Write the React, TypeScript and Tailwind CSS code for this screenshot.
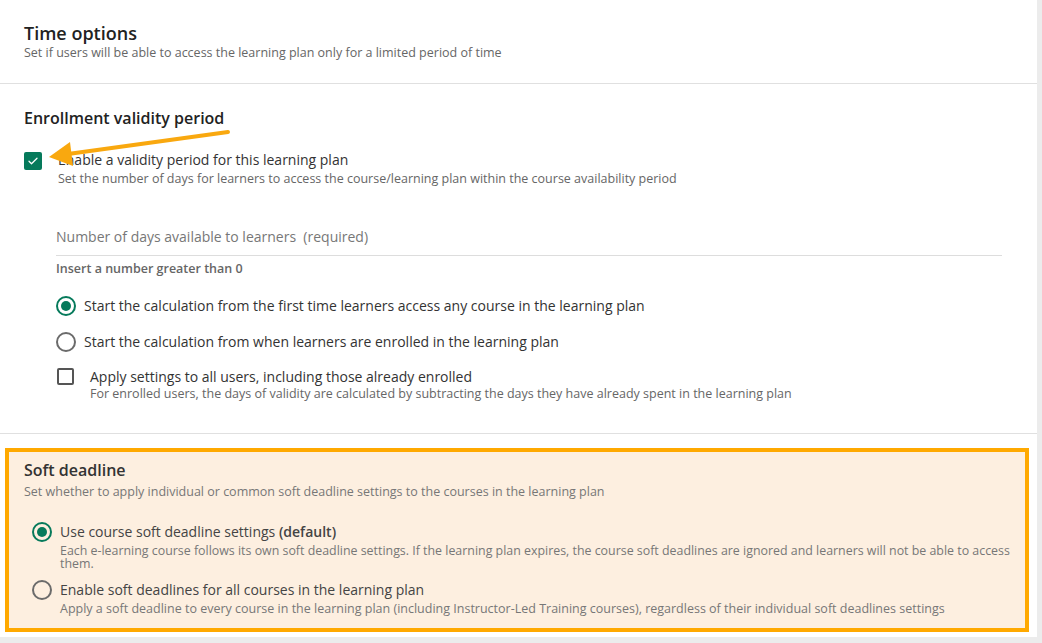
import React from 'react';

function Radio({ checked }: { checked?: boolean }) {
  return checked ? (
    <span className="flex h-[20px] w-[20px] shrink-0 items-center justify-center rounded-full border-2 border-[#067a5b]">
      <span className="h-[10px] w-[10px] rounded-full bg-[#067a5b]" />
    </span>
  ) : (
    <span className="block h-[20px] w-[20px] shrink-0 rounded-full border-2 border-[#6b6b6b]" />
  );
}

function Arrow() {
  return (
    <svg className="pointer-events-none absolute left-0 top-0" width="260" height="190" viewBox="0 0 260 190">
      <line x1="228" y1="132" x2="68" y2="154" stroke="#f9a80f" strokeWidth="4" strokeLinecap="round" />
      <polygon points="49,157 70,142 73,166" fill="#f9a80f" />
    </svg>
  );
}

export default function App() {
  return (
    <div className="relative flex h-[643px] w-[1042px] bg-[#ececec] font-['Open_Sans',sans-serif] text-[#333]">
      <div className="h-[637px] w-[1037px] overflow-hidden bg-white">
        {/* Time options header */}
        <div className="h-[84px] border-b border-[#e0e0e0] px-[24px] pt-[20px]">
          <h1 className="text-[18px] font-semibold leading-[26px] text-[#222]">Time options</h1>
          <p className="text-[12.5px] leading-[14px] text-[#666]">
            Set if users will be able to access the learning plan only for a limited period of time
          </p>
        </div>

        {/* Enrollment validity period */}
        <div className="h-[350px] border-b border-[#e0e0e0] pl-[24px] pr-[35px] pt-[22px]">
          <h2 className="text-[16px] font-semibold leading-[24px] text-[#222]">Enrollment validity period</h2>

          <div className="mt-[20px] flex gap-[16px]">
            <span className="mt-[2px] flex h-[18px] w-[18px] shrink-0 items-center justify-center rounded-[2px] bg-[#067a5b]">
              <svg width="12" height="12" viewBox="0 0 24 24" fill="none" stroke="white" strokeWidth="2.5" strokeLinecap="round" strokeLinejoin="round">
                <path d="M4 12.5l5 5L20 6.5" />
              </svg>
            </span>
            <div>
              <p className="text-[14px] leading-[20px] text-[#333]">Enable a validity period for this learning plan</p>
              <p className="text-[12.5px] leading-[17px] text-[#666]">
                Set the number of days for learners to access the course/learning plan within the course availability period
              </p>
            </div>
          </div>

          <div className="ml-[32px] mt-[40px]">
            <div className="border-b border-[#ddd] pb-[8px] text-[14px] leading-[20px] text-[#777]">
              Number of days available to learners&nbsp; (required)
            </div>
            <p className="mt-[5px] text-[12.5px] font-semibold leading-[16px] text-[#666]">Insert a number greater than 0</p>

            <div className="mt-[19px] flex items-center gap-[8px]">
              <Radio checked />
              <span className="text-[14px] leading-[20px]">
                Start the calculation from the first time learners access any course in the learning plan
              </span>
            </div>
            <div className="mt-[16px] flex items-center gap-[8px]">
              <Radio />
              <span className="text-[14px] leading-[20px]">Start the calculation from when learners are enrolled in the learning plan</span>
            </div>
            <div className="mt-[15px] flex gap-[16px]">
              <span className="ml-[1px] mt-[1px] h-[17px] w-[17px] shrink-0 rounded-[2px] border-2 border-[#555]" />
              <div>
                <p className="text-[14px] leading-[19px]">Apply settings to all users, including those already enrolled</p>
                <p className="text-[12.5px] leading-[16px] text-[#666]">
                  For enrolled users, the days of validity are calculated by subtracting the days they have already spent in the learning plan
                </p>
              </div>
            </div>
          </div>
        </div>

        {/* Soft deadline */}
        <div className="pl-[5px] pr-[8px] pt-[14px]">
          <div className="h-[184px] border-4 border-[#ffa900] bg-[#fdefe0] pl-[15px] pr-[6px] pt-[6px]">
            <h2 className="text-[16px] font-semibold leading-[24px] text-[#333]">Soft deadline</h2>
            <p className="mt-[2px] text-[12.5px] leading-[16px] text-[#777]">
              Set whether to apply individual or common soft deadline settings to the courses in the learning plan
            </p>

            <div className="mt-[22px] flex gap-[8px] pl-[8px]">
              <span className="flex shrink-0"><Radio checked /></span>
              <div>
                <p className="text-[14px] leading-[20px] text-[#444]">
                  Use course soft deadline settings <span className="font-semibold">(default)</span>
                </p>
                <p className="mt-[2px] text-[12.4px] leading-[13px] text-[#777]">
                  Each e-learning course follows its own soft deadline settings. If the learning plan expires, the course soft deadlines are ignored and learners will not be able to access them.
                </p>
              </div>
            </div>
            <div className="mt-[10px] flex gap-[8px] pl-[8px]">
              <span className="flex shrink-0"><Radio /></span>
              <div>
                <p className="text-[14px] leading-[20px] text-[#444]">Enable soft deadlines for all courses in the learning plan</p>
                <p className="mt-[1px] text-[12.5px] leading-[16px] text-[#777]">
                  Apply a soft deadline to every course in the learning plan (including Instructor-Led Training courses), regardless of their individual soft deadlines settings
                </p>
              </div>
            </div>
          </div>
        </div>
      </div>
      <Arrow />
    </div>
  );
}
